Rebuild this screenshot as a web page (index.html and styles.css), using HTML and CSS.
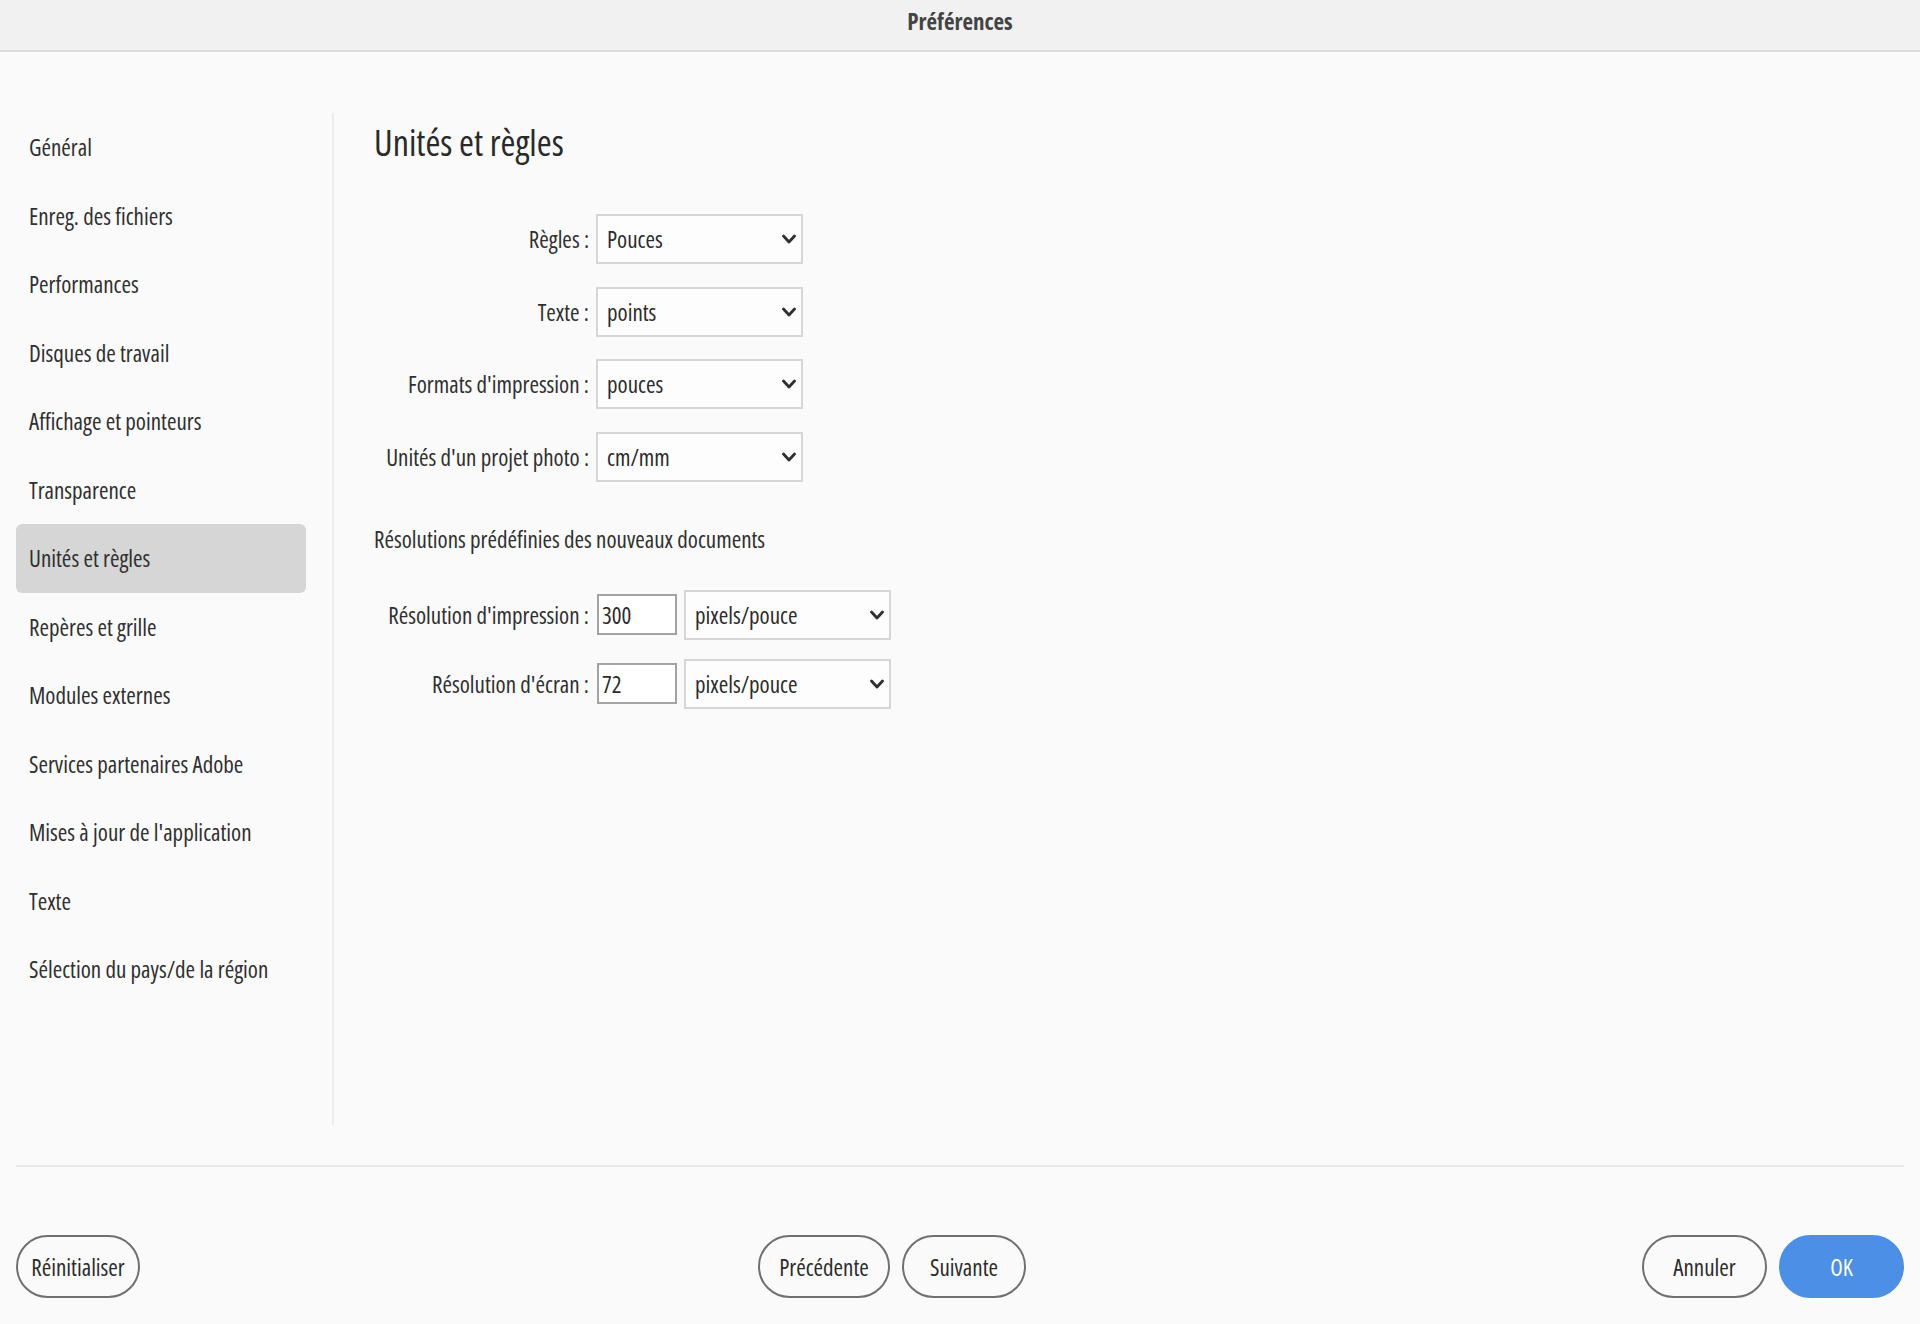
FILE: index.html
```html
<!DOCTYPE html>
<html lang="fr">
<head>
    <meta charset="UTF-8">
    <meta name="viewport" content="width=device-width, initial-scale=1.0">
    <title>Préférences</title>
    <link rel="stylesheet" href="styles.css">
</head>
<body>
    <div class="title-bar">Préférences</div>

    <div class="main">
        <!-- Categories -->
        <ul class="sidebar">
            <li>Général</li>
            <li>Enreg. des fichiers</li>
            <li>Performances</li>
            <li>Disques de travail</li>
            <li>Affichage et pointeurs</li>
            <li>Transparence</li>
            <li class="active">Unités et règles</li>
            <li>Repères et grille</li>
            <li>Modules externes</li>
            <li>Services partenaires Adobe</li>
            <li>Mises à jour de l'application</li>
            <li>Texte</li>
            <li>Sélection du pays/de la région</li>
        </ul>

        <div class="content">
            <h1>Unités et règles</h1>

            <div class="form units-form">
                <label>Règles :</label>
                <div class="select"><span>Pouces</span><svg viewBox="0 0 14 10" width="14" height="10"><polyline points="1.5,2 7,8 12.5,2"/></svg></div>

                <label>Texte :</label>
                <div class="select"><span>points</span><svg viewBox="0 0 14 10" width="14" height="10"><polyline points="1.5,2 7,8 12.5,2"/></svg></div>

                <label>Formats d'impression :</label>
                <div class="select"><span>pouces</span><svg viewBox="0 0 14 10" width="14" height="10"><polyline points="1.5,2 7,8 12.5,2"/></svg></div>

                <label>Unités d'un projet photo :</label>
                <div class="select"><span>cm/mm</span><svg viewBox="0 0 14 10" width="14" height="10"><polyline points="1.5,2 7,8 12.5,2"/></svg></div>
            </div>

            <h2>Résolutions prédéfinies des nouveaux documents</h2>

            <div class="form res-form">
                <label>Résolution d'impression :</label>
                <div class="field-group">
                    <input type="text" class="num" value="300">
                    <div class="select"><span>pixels/pouce</span><svg viewBox="0 0 14 10" width="14" height="10"><polyline points="1.5,2 7,8 12.5,2"/></svg></div>
                </div>

                <label>Résolution d'écran :</label>
                <div class="field-group">
                    <input type="text" class="num" value="72">
                    <div class="select"><span>pixels/pouce</span><svg viewBox="0 0 14 10" width="14" height="10"><polyline points="1.5,2 7,8 12.5,2"/></svg></div>
                </div>
            </div>
        </div>
    </div>

    <div class="footer">
        <button class="btn">Réinitialiser</button>
        <div class="nav-buttons">
            <button class="btn btn-wide">Précédente</button>
            <button class="btn">Suivante</button>
        </div>
        <div class="confirm-buttons">
            <button class="btn">Annuler</button>
            <button class="btn btn-primary">OK</button>
        </div>
    </div>
</body>
</html>
```

FILE: styles.css
```css
body {
    margin: 0;
    height: 1324px;
    background-color: #fafafa;
    color: #2c2c2c;
    font-family: "Open Sans", "Roboto", sans-serif;
    font-stretch: 75%;
    font-size: 23px;
    display: flex;
    flex-direction: column;
}

.title-bar {
    height: 50px;
    line-height: 42px;
    text-align: center;
    font-weight: bold;
    font-size: 23px;
    color: #444;
    background-color: #f1f1f1;
    border-bottom: 2px solid #dedede;
}

.main {
    flex: 1;
    display: flex;
    padding-top: 61px;
    padding-bottom: 40px;
}

/* left column with the categories */
.sidebar {
    list-style: none;
    margin: 0 0 0 16px;
    padding: 0 26px 0 0;
    width: 290px;
    border-right: 2px solid #ececec;
}

.sidebar li {
    height: 68.5px;
    line-height: 68.5px;
    padding-left: 13px;
    border-radius: 6px;
    color: #303030;
    white-space: nowrap;
}

.sidebar li.active {
    background-color: #d6d6d6;
}

.content {
    flex: 1;
    padding-left: 40px;
}

h1 {
    margin: 10px 0 0 0;
    font-size: 36px;
    font-weight: normal;
    line-height: 40px;
    color: #2a2a2a;
}

h2 {
    margin: 42px 0 0 0;
    font-size: 23px;
    font-weight: normal;
    line-height: 30px;
    color: #303030;
}

.form {
    display: grid;
    grid-template-columns: 215px auto;
    column-gap: 7px;
    align-items: center;
    justify-content: start;
}

.units-form {
    margin-top: 51px;
    row-gap: 22.5px;
}

.res-form {
    margin-top: 36px;
    row-gap: 19px;
}

.form label {
    text-align: right;
    white-space: nowrap;
    color: #303030;
}

.select {
    box-sizing: border-box;
    width: 207px;
    height: 50px;
    display: flex;
    align-items: center;
    justify-content: space-between;
    padding: 0 5px 0 9px;
    background-color: #fdfdfd;
    border: 2px solid #d6d6d6;
}

.select svg {
    fill: none;
    stroke: #2f2f2f;
    stroke-width: 2.8;
    stroke-linecap: round;
    stroke-linejoin: round;
}

.field-group {
    display: flex;
    align-items: center;
    gap: 7px;
}

.num {
    box-sizing: border-box;
    width: 80px;
    height: 41px;
    margin: 0 0 0 1px;
    padding: 0 3px;
    font-family: inherit;
    font-stretch: 75%;
    font-size: 23px;
    color: #2c2c2c;
    background-color: #fff;
    border: 2px solid #a3a3a3;
    outline: none;
}

.footer {
    margin: 0 16px;
    height: 159px;
    border-top: 2px solid #e8e8e8;
    padding-top: 68px;
    box-sizing: border-box;
    display: flex;
    align-items: flex-start;
}

.nav-buttons {
    margin-left: 618px;
    display: flex;
    gap: 12px;
}

.confirm-buttons {
    margin-left: auto;
    display: flex;
    gap: 12px;
}

.btn {
    width: 124px;
    height: 63px;
    padding: 0;
    border: 2px solid #707070;
    border-radius: 32px;
    background-color: transparent;
    color: #2c2c2c;
    font-family: inherit;
    font-stretch: 75%;
    font-size: 23px;
    cursor: pointer;
}

.btn-wide {
    width: 132px;
}

.confirm-buttons .btn {
    width: 125px;
}

.btn-primary {
    background-color: #4b8fe6;
    border-color: #4b8fe6;
    color: #fff;
}
```
